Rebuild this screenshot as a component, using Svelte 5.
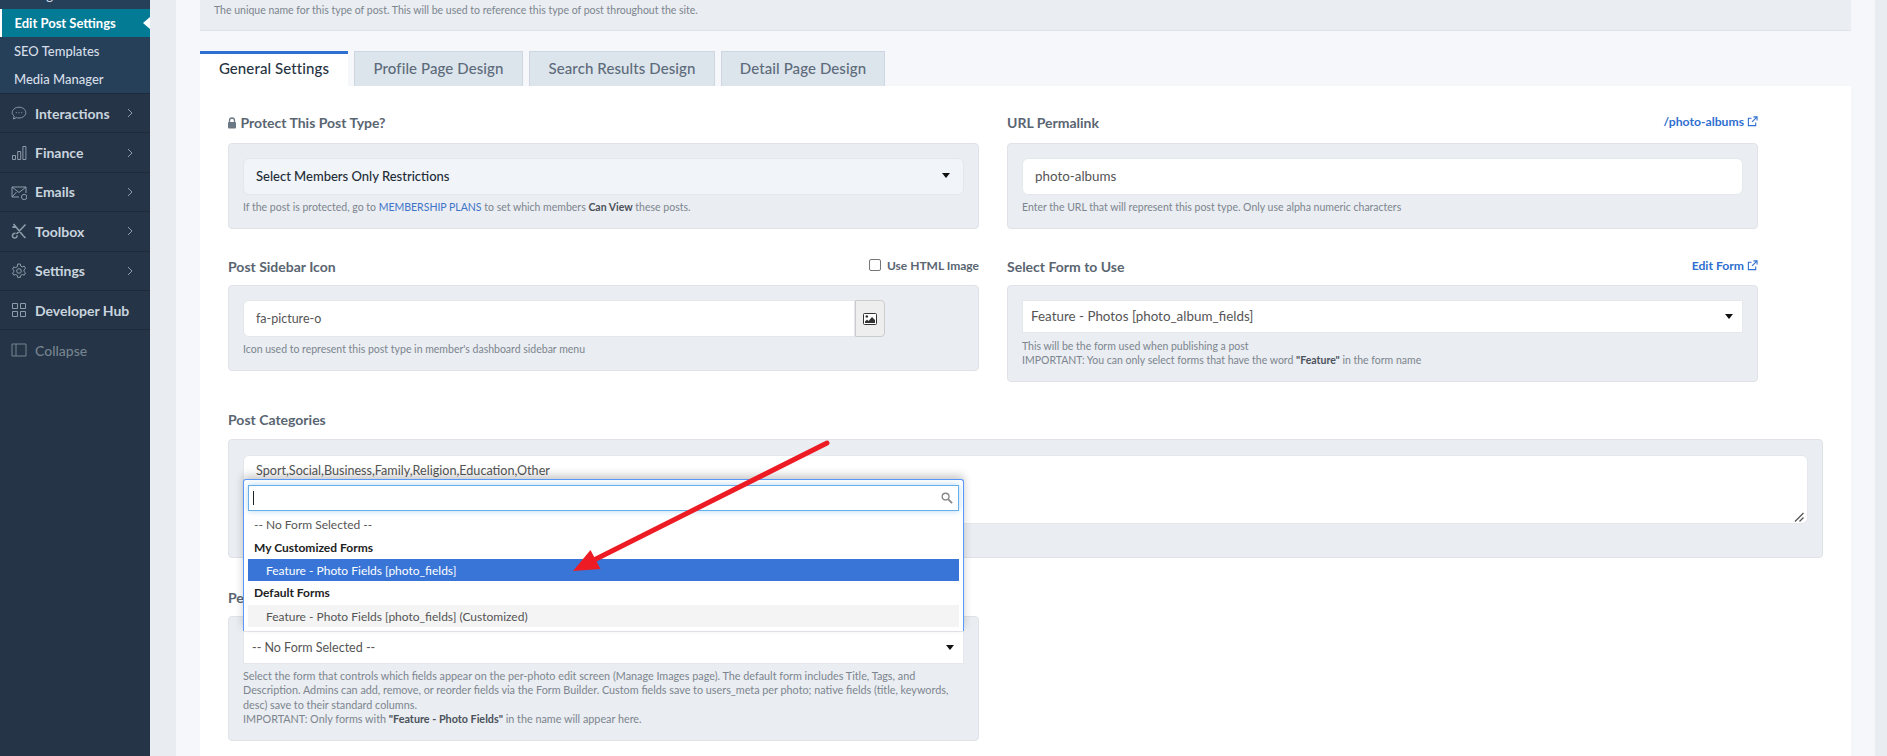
<script>
  // sidebar menu, icons are stroke paths on a 16x16 box
  const menu = [
    { label: 'Interactions', arrow: true, icon: 'M8 2.200c3.700 0 6.800 2.400 6.800 5.400S11.700 13 8 13c-.9 0-1.700-.1-2.500-.4L2.400 14l.8-2.900C2 10.100 1.200 8.900 1.200 7.600 1.200 4.600 4.300 2.200 8 2.200zM4.800 7.700h1M7.500 7.700h1M10.200 7.700h1' },
    { label: 'Finance', arrow: true, icon: 'M1.500 10.500h3v4h-3zM6.700 6.500h3v8h-3zM11.900 1.500h3v13h-3z' },
    { label: 'Emails', arrow: true, icon: 'M1 3h14v6M8 13H1V3l7 5.500L15 3M1 13l4.500-5M10.500 13a2.700 2.700 0 1 0 5.400 0a2.700 2.700 0 1 0-5.400 0z' },
    { label: 'Toolbox', arrow: true, thick: true, icon: 'M2.500 1l9.500 11.500M12 12.500l2.500 2.500M14.500 1.500L5.500 11M4.500 10.500a2.300 2.300 0 1 0 1.500 1.800M1.500 4.500L4 3' },
    { label: 'Settings', arrow: true, icon: 'M6.700 1h2.600l.4 2 1.600.9 1.900-.7 1.300 2.300-1.500 1.300v1.800l1.500 1.300-1.300 2.300-1.900-.7-1.600.9-.4 2H6.700l-.4-2-1.600-.9-1.900.7-1.300-2.300 1.500-1.300V7.500L1.500 6.200l1.300-2.300 1.900.7 1.600-.9zM5.700 8a2.300 2.300 0 1 0 4.600 0a2.300 2.300 0 1 0-4.600 0z' },
    { label: 'Developer Hub', icon: 'M1.500 1.500h5v5h-5zM9.500 1.500h5v5h-5zM1.500 9.500h5v5h-5zM9.500 9.500h5v5h-5z' },
    { label: 'Collapse', muted: true, icon: 'M1 2h14v12H1zM5 2v12' }
  ];
  const tabs = ['General Settings', 'Profile Page Design', 'Search Results Design', 'Detail Page Design'];
</script>

{#snippet external()}
  <svg class="ext" viewBox="0 0 12 12" width="11" height="11"><path d="M9.500 7v3.500h-8v-8H5M7 1h4v4M11 1L5.500 6.500" fill="none" stroke="currentColor" stroke-width="1.200"/></svg>
{/snippet}

{#snippet caret()}
  <svg class="caret" viewBox="0 0 8 5" width="8" height="5"><path d="M0 0h8L4 5z" fill="#111"/></svg>
{/snippet}

<div class="page">
  <aside class="sidebar">
    <div class="submenu">
      <a class="sub" href="#a">Manage Posts</a>
      <a class="sub active" href="#a">Edit Post Settings</a>
      <a class="sub" href="#a">SEO Templates</a>
      <a class="sub" href="#a">Media Manager</a>
    </div>
    {#each menu as item}
      <a class="item" class:muted={item.muted} href="#a">
        <svg viewBox="0 0 16 16" width="16" height="16"><path d={item.icon} fill="none" stroke="currentColor" stroke-width={item.thick ? 1.6 : 1}/></svg>
        <span>{item.label}</span>
        {#if item.arrow}
          <svg class="chev" viewBox="0 0 6 10" width="6" height="10"><path d="M1 1l4 4-4 4" fill="none" stroke="currentColor" stroke-width="1"/></svg>
        {/if}
      </a>
    {/each}
  </aside>

  <main class="main">
    <div class="wrap">
      <div class="topbox"><p class="hint">The unique name for this type of post. This will be used to reference this type of post throughout the site.</p></div>

      <nav class="tabs">
        {#each tabs as tab, i}
          <div class="tab" class:on={i === 0}>{tab}</div>
        {/each}
      </nav>

      <section class="panel">
        <div class="row">
          <div class="field">
            <div class="head">
              <label class="title" for="protect">
                <svg class="lock" viewBox="0 0 10 12" width="10" height="12"><path d="M2.500 5V3.500a2.500 2.500 0 0 1 5 0V5" fill="none" stroke="#6b7785" stroke-width="1.300"/><rect x="1" y="5" width="8" height="6.500" rx="1" fill="#6b7785"/></svg>
                Protect This Post Type?
              </label>
            </div>
            <div class="box">
              <div class="control grey" id="protect"><b>Select Members Only Restrictions</b>{@render caret()}</div>
              <p class="hint">If the post is protected, go to <a href="#a">MEMBERSHIP PLANS</a> to set which members <strong>Can View</strong> these posts.</p>
            </div>
          </div>

          <div class="field">
            <div class="head">
              <span class="title">URL Permalink</span>
              <a class="link" href="#a">/photo-albums {@render external()}</a>
            </div>
            <div class="box">
              <div class="control roomy">photo-albums</div>
              <p class="hint">Enter the URL that will represent this post type. Only use alpha numeric characters</p>
            </div>
          </div>
        </div>

        <div class="row second">
          <div class="field">
            <div class="head tight">
              <span class="title">Post Sidebar Icon</span>
              <label class="check"><span class="tick"></span>Use HTML Image</label>
            </div>
            <div class="box">
              <div class="group">
                <div class="control">fa-picture-o</div>
                <div class="addon">
                  <svg viewBox="0 0 14 12" width="14" height="12"><rect x=".5" y=".5" width="13" height="11" rx="1" fill="#fff" stroke="#333"/><path d="M2 10V8.500l2-2 1.500 1.500L9 4l3 3v3z" fill="#333"/><circle cx="3.800" cy="3.500" r="1.300" fill="#333"/></svg>
                </div>
              </div>
              <p class="hint">Icon used to represent this post type in member's dashboard sidebar menu</p>
            </div>
          </div>

          <div class="field">
            <div class="head tight">
              <span class="title">Select Form to Use</span>
              <a class="link" href="#a">Edit Form {@render external()}</a>
            </div>
            <div class="box">
              <div class="control square roomy">Feature - Photos [photo_album_fields]{@render caret()}</div>
              <p class="hint gap">This will be the form used when publishing a post<br>IMPORTANT: You can only select forms that have the word <strong>"Feature"</strong> in the form name</p>
            </div>
          </div>
        </div>

        <div class="field wide">
          <div class="head cats"><span class="title">Post Categories</span></div>
          <div class="box catbox">
            <div class="textarea">
              Sport,Social,Business,Family,Religion,Education,Other
              <svg class="grip" viewBox="0 0 10 10" width="10" height="10"><path d="M1 9.500L9.500 1M5.500 9.500L9.500 5.500" stroke="#555" stroke-width="1.300"/></svg>
            </div>
          </div>
        </div>

        <div class="field photo">
          <div class="head tight"><span class="title">Per-Photo Edit Form</span></div>
          <div class="box">
            <div class="control square">-- No Form Selected --{@render caret()}</div>
            <p class="hint long">Select the form that controls which fields appear on the per-photo edit screen (Manage Images page). The default form includes Title, Tags, and Description. Admins can add, remove, or reorder fields via the Form Builder. Custom fields save to users_meta per photo; native fields (title, keywords, desc) save to their standard columns.<br>IMPORTANT: Only forms with <strong>"Feature - Photo Fields"</strong> in the name will appear here.</p>
          </div>

          <div class="dropdown">
            <div class="search">
              <span class="cursor"></span>
              <svg viewBox="0 0 13 13" width="12" height="12"><circle cx="5" cy="5" r="3.700" fill="none" stroke="#888" stroke-width="1.500"/><path d="M8 8l4 4" stroke="#888" stroke-width="2"/></svg>
            </div>
            <ul>
              <li class="opt plain">-- No Form Selected --</li>
              <li class="group-label">My Customized Forms</li>
              <li class="opt current">Feature - Photo Fields [photo_fields]</li>
              <li class="group-label">Default Forms</li>
              <li class="opt taken">Feature - Photo Fields [photo_fields] (Customized)</li>
            </ul>
          </div>
        </div>
      </section>
    </div>
  </main>

  <!-- red annotation drawn over the screenshot -->
  <svg class="annotation" viewBox="0 0 1887 756" width="1887" height="756">
    <path d="M827 443L592 561" stroke="#ed1c24" stroke-width="5" stroke-linecap="round"/>
    <path d="M573 571L590.500 550L600.500 569z" fill="#ed1c24"/>
  </svg>
</div>

<style>
  :global(body) {
    margin: 0;
    overflow: hidden;
    font-family: Lato, "Noto Sans", sans-serif;
    color: #5b6672;
  }

  .page {
    position: relative;
    display: flex;
    width: 1887px;
    height: 756px;
    overflow: hidden;
    background: #e9ecf1;
  }

  /* sidebar */
  .sidebar {
    flex: none;
    width: 150px;
    background: #253446;
    overflow: hidden;
  }

  .submenu {
    margin-top: -19px;
    background: #27405a;
    border-bottom: 1px solid #1d2a39;
  }

  .sub {
    display: flex;
    align-items: center;
    height: 28px;
    padding-left: 14px;
    font-size: 13px;
    font-weight: 500;
    color: #d5dee7;
    text-decoration: none;
  }

  .sub.active {
    position: relative;
    padding-left: 12.500px;
    border-left: 2px solid #fff;
    background: #047b94;
    color: #fff;
    font-weight: 700;
  }

  .sub.active::after {
    content: '';
    position: absolute;
    right: 0;
    top: 8px;
    border: 6px solid transparent;
    border-right: 7px solid #fff;
    border-left: 0;
  }

  .item {
    display: flex;
    align-items: center;
    height: 39.400px;
    box-sizing: border-box;
    padding-left: 11px;
    border-bottom: 1px solid #1d2a39;
    font-size: 14px;
    font-weight: 700;
    color: #c9d4df;
    text-decoration: none;
  }

  .item > svg:first-child {
    flex: none;
    margin-right: 8px;
    color: #8e9cab;
  }

  .item .chev {
    margin-left: auto;
    margin-right: 17px;
    color: #8e9cab;
  }

  .item.muted {
    border-bottom: 0;
    color: #76838f;
    font-weight: 500;
  }

  .item.muted > svg:first-child {
    color: #76838f;
  }

  /* main column */
  .main {
    flex: 1;
    padding: 0 12px 0 26px;
    min-width: 0;
  }

  .wrap {
    height: 100%;
    padding: 0 24px;
    background: #f5f7fb;
  }

  .topbox {
    height: 31px;
    box-sizing: border-box;
    padding: 3px 14px 0;
    background: #eaedf1;
    border-bottom: 1px solid #dfe2e6;
  }

  .topbox .hint {
    margin: 0;
    line-height: 14px;
  }

  .tabs {
    display: flex;
    gap: 6px;
    margin-top: 20px;
    height: 35px;
  }

  .tab {
    box-sizing: border-box;
    display: flex;
    align-items: center;
    justify-content: center;
    width: 169px;
    padding-bottom: 2px;
    background: #dce4ec;
    border: 1px solid #ced7e1;
    border-bottom: 0;
    font-size: 15px;
    font-weight: 500;
    letter-spacing: .1px;
    color: #5d6b7a;
  }

  .tab:nth-child(3) { width: 186px; }
  .tab:nth-child(4) { width: 164px; }

  .tab.on {
    width: 148px;
    padding-bottom: 4px;
    background: #fff;
    border: 0;
    border-top: 3px solid #2f6fd0;
    color: #26333f;
  }

  .panel {
    height: 670px;
    box-sizing: border-box;
    padding: 27px 28px 0;
    background: #fff;
  }

  .row {
    display: grid;
    grid-template-columns: 751px 751px;
    gap: 28px;
  }

  .row.second {
    margin-top: 28px;
  }

  .head {
    display: flex;
    justify-content: space-between;
    height: 20px;
    margin-bottom: 10px;
  }

  .head.tight { margin-bottom: 8px; }
  .head.cats { margin-bottom: 9px; }

  .title {
    font-size: 14px;
    font-weight: 700;
    line-height: 20px;
    color: #5a6572;
  }

  .lock {
    margin-left: -1px;
    vertical-align: -1px;
  }

  .link {
    font-size: 12.200px;
    font-weight: 700;
    line-height: 18px;
    color: #2f6fd0;
    text-decoration: none;
  }

  .ext {
    vertical-align: -1px;
  }

  .check {
    display: flex;
    align-items: center;
    gap: 6px;
    height: 16px;
    font-size: 12px;
    font-weight: 700;
    color: #5a6572;
  }

  .tick {
    width: 10px;
    height: 10px;
    background: #fff;
    border: 1px solid #767676;
    border-radius: 2px;
  }

  .box {
    box-sizing: border-box;
    padding: 14px 14px 14px;
    background: #eaedf1;
    border: 1px solid #dfe2e6;
    border-radius: 4px;
  }

  .field > .box { min-height: 86px; }

  .control {
    display: flex;
    align-items: center;
    justify-content: space-between;
    box-sizing: border-box;
    height: 37px;
    padding: 0 12px;
    background: #fff;
    border: 1px solid #e4e7eb;
    border-radius: 6px;
    font-size: 12.500px;
    color: #555;
  }

  .control.roomy {
    padding-bottom: 1px;
    font-size: 13.400px;
  }

  .control.grey {
    padding-bottom: 2px;
    background: #f1f4f8;
    color: #222c37;
    font-size: 13px;
  }

  .control b { font-weight: 500; }

  .control.square {
    height: 33px;
    padding-left: 8px;
    padding-right: 8px;
    border-radius: 0;
  }

  .caret { margin-right: 1px; }

  .group {
    display: flex;
    width: 642px;
  }

  .group .control {
    flex: 1;
    border-radius: 6px 0 0 6px;
  }

  .addon {
    display: flex;
    align-items: center;
    justify-content: center;
    width: 30px;
    box-sizing: border-box;
    background: #eee;
    border: 1px solid #ccc;
    border-radius: 0 4px 4px 0;
  }

  .hint {
    margin: 5px 0 0;
    font-size: 10.500px;
    line-height: 14px;
    color: #7c858f;
  }

  .hint.gap { margin-top: 6px; }
  .hint a { color: #3d74c9; text-decoration: none; }
  .hint strong { color: #4a525b; font-weight: 700; }

  .wide { margin-top: 28px; }

  .catbox {
    height: 119px;
    width: 1595px;
    padding-top: 15px;
  }

  .textarea {
    position: relative;
    box-sizing: border-box;
    height: 69px;
    padding: 6px 12px;
    background: #fff;
    border: 1px solid #e4e7eb;
    border-radius: 6px;
    font-size: 12.600px;
    line-height: 18px;
    color: #555;
  }

  .grip {
    position: absolute;
    right: 3px;
    bottom: 1px;
  }

  .photo {
    position: relative;
    margin-top: 30px;
    width: 751px;
  }

  .photo .hint { line-height: 14.300px; }
  .hint.long { font-size: 10.800px; }

  /* open select overlay, sits on top of the field below the categories */
  .dropdown {
    position: absolute;
    left: 15px;
    top: -109px;
    box-sizing: border-box;
    width: 721px;
    height: 152px;
    padding: 5px 4px 0;
    background: #fff;
    border: 1px solid #5897fb;
    border-bottom: 0;
    border-radius: 3px 3px 0 0;
    box-shadow: 0 -4px 8px rgba(0, 0, 0, .2);
  }

  .search {
    display: flex;
    align-items: center;
    justify-content: space-between;
    box-sizing: border-box;
    height: 26px;
    padding: 0 5px 0 4px;
    border: 1px solid #66afe9;
    box-shadow: 0 0 6px rgba(102, 175, 233, .5);
  }

  .cursor {
    width: 1px;
    height: 14px;
    background: #222;
  }

  ul {
    margin: 2px 0 0;
    padding: 0;
    list-style: none;
    font-size: 12px;
  }

  li {
    display: flex;
    align-items: center;
    height: 23px;
  }

  .opt.plain { padding-left: 6px; color: #555; }
  .group-label { padding-left: 6px; font-weight: 700; color: #222; }
  .opt.current { padding-left: 18px; background: #3875d7; color: #fff; height: 22px; }
  .opt.taken { padding-left: 18px; background: #f4f4f4; color: #555; height: 22px; margin-top: 1px; }

  .annotation {
    position: absolute;
    inset: 0;
    pointer-events: none;
  }
</style>
